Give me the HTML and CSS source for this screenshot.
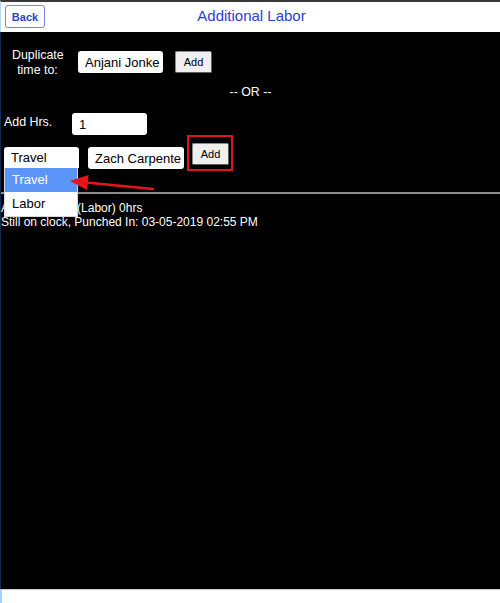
FILE: index.html
```html
<!DOCTYPE html>
<html lang="en">
<head>
  <meta charset="utf-8">
  <meta name="viewport" content="width=device-width, initial-scale=1.0">
  <title>Additional Labor</title>
  <link rel="stylesheet" href="styles.css">
</head>
<body>
  <div class="page">
    <header class="topbar">
      <button class="back-btn">Back</button>
      <h1>Additional Labor</h1>
    </header>

    <main class="content">
      <div class="row row-duplicate">
        <label class="dup-label">Duplicate<br>time to:</label>
        <input class="field field-emp" type="text" value="Anjani Jonker">
        <button class="add-btn">Add</button>
      </div>

      <div class="or-line">-- OR --</div>

      <div class="row row-hours">
        <label class="hrs-label">Add Hrs.</label>
        <input class="field field-hrs" type="text" value="1">
      </div>

      <div class="row row-type">
        <div class="select-wrap">
          <div class="select-box">Travel</div>
          <ul class="select-list">
            <li class="active">Travel</li>
            <li>Labor</li>
          </ul>
        </div>
        <input class="field field-emp2" type="text" value="Zach Carpenter">
        <div class="add-wrap">
          <button class="add-btn">Add</button>
        </div>
      </div>

      <hr class="divider">

      <div class="entries">
        <p>Anjani Jonker (Labor) 0hrs</p>
        <p>Still on clock, Punched In: 03-05-2019 02:55 PM</p>
      </div>
    </main>

    <footer class="bottom"></footer>

    <!-- callout arrow pointing at the open option -->
    <svg class="callout" viewBox="0 0 500 603" xmlns="http://www.w3.org/2000/svg">
      <line x1="153" y1="189" x2="86" y2="182.5" stroke="#e8141b" stroke-width="2.5" stroke-linecap="round"/>
      <polygon points="70,181 88.6,175 87.2,190" fill="#e8141b"/>
    </svg>
  </div>
</body>
</html>
```

FILE: styles.css
```css
* {
  box-sizing: border-box;
  margin: 0;
  padding: 0;
}
html, body {
  height: 100%;
}
body {
  font-family: "Liberation Sans", Arial, sans-serif;
  background: #fff;
  color: #fff;
}
.page {
  position: relative;
  height: 603px;
  display: flex;
  flex-direction: column;
  overflow: hidden;
}
.topbar {
  position: relative;
  height: 32px;
  border-top: 2px solid #3a3a3a;
  border-left: 1px solid #b9dcf6;
  background: #fff;
  display: flex;
  align-items: center;
  justify-content: center;
}
.topbar h1 {
  font-size: 15px;
  font-weight: normal;
  color: #2b3ed3;
  margin-top: -4px;
  margin-left: 2px;
}
.back-btn {
  position: absolute;
  left: 4px;
  top: 3px;
  width: 40px;
  height: 23px;
  background: #fff;
  border: 1px solid #7c82e6;
  border-radius: 3px;
  font-family: "Liberation Sans", Arial, sans-serif;
  font-size: 11px;
  font-weight: bold;
  color: #2f3fc9;
}
.content {
  position: relative;
  flex: 1;
  background: #000;
  border-left: 1px solid #0f2d4f;
  font-size: 12.4px;
}
.row {
  display: flex;
  align-items: center;
}
.row-duplicate {
  margin-top: 15px;
  height: 30px;
}
.dup-label {
  width: 51px;
  margin-left: 11px;
  text-align: center;
  line-height: 15px;
  margin-top: 2px;
}
.field {
  height: 22px;
  border: none;
  border-radius: 3px;
  background: #fff;
  color: #000;
  font-family: "Liberation Sans", Arial, sans-serif;
  font-size: 13px;
  padding: 0 3px 0 7px;
  outline: none;
}
.field-emp {
  width: 85px;
  margin-left: 15px;
}
.add-btn {
  width: 37px;
  height: 22px;
  background: #efefef;
  border: 1px solid #8a8a8a;
  border-right-color: #5e5e5e;
  border-bottom-color: #5e5e5e;
  border-radius: 2px;
  font-family: "Liberation Sans", Arial, sans-serif;
  font-size: 11px;
  color: #000;
}
.row-duplicate .add-btn {
  margin-left: 12px;
}
.or-line {
  margin-top: 8px;
  line-height: 15px;
  text-align: center;
}
.row-hours {
  margin-top: 13px;
  align-items: flex-start;
}
.hrs-label {
  width: 68px;
  margin-left: 3px;
  line-height: 16px;
  margin-top: 1px;
}
.field-hrs {
  width: 75px;
}
.row-type {
  margin-top: 8px;
  align-items: flex-start;
}
.select-wrap {
  position: relative;
  margin-left: 3px;
  margin-top: 4px;
  z-index: 2;
  font-size: 13px;
}
.select-box {
  width: 75px;
  height: 21px;
  line-height: 21px;
  background: #fff;
  color: #000;
  border-radius: 3px 3px 0 0;
  padding-left: 7px;
}
.select-list {
  position: absolute;
  top: 100%;
  left: 0;
  width: 74px;
  list-style: none;
  background: #fff;
  color: #000;
  border: 1px solid #d8d8d8;
  border-top: none;
}
.select-list li {
  height: 24px;
  line-height: 23px;
  padding-left: 7px;
}
.select-list li.active {
  background: #5b95f7;
  color: #fff;
}
.field-emp2 {
  width: 96px;
  margin-left: 9px;
  margin-top: 4px;
}
.add-wrap {
  position: relative;
  margin-left: 8px;
}
/* red highlight around the second add button */
.add-wrap::after {
  content: "";
  position: absolute;
  left: -5px;
  top: -8px;
  right: -4px;
  bottom: -6px;
  border: 2px solid #e0141c;
}
.divider {
  margin-top: 23px;
  border: none;
  height: 2px;
  background: #8c8c8c;
}
.entries {
  margin-top: 7px;
  line-height: 14px;
  font-size: 12px;
}
.bottom {
  height: 14px;
  border-top: 1px solid #c8c8c8;
  border-left: 2px solid #a3d2f4;
  background: #fff;
}
.callout {
  position: absolute;
  left: 0;
  top: 0;
  width: 500px;
  height: 603px;
  pointer-events: none;
  z-index: 5;
}
```
